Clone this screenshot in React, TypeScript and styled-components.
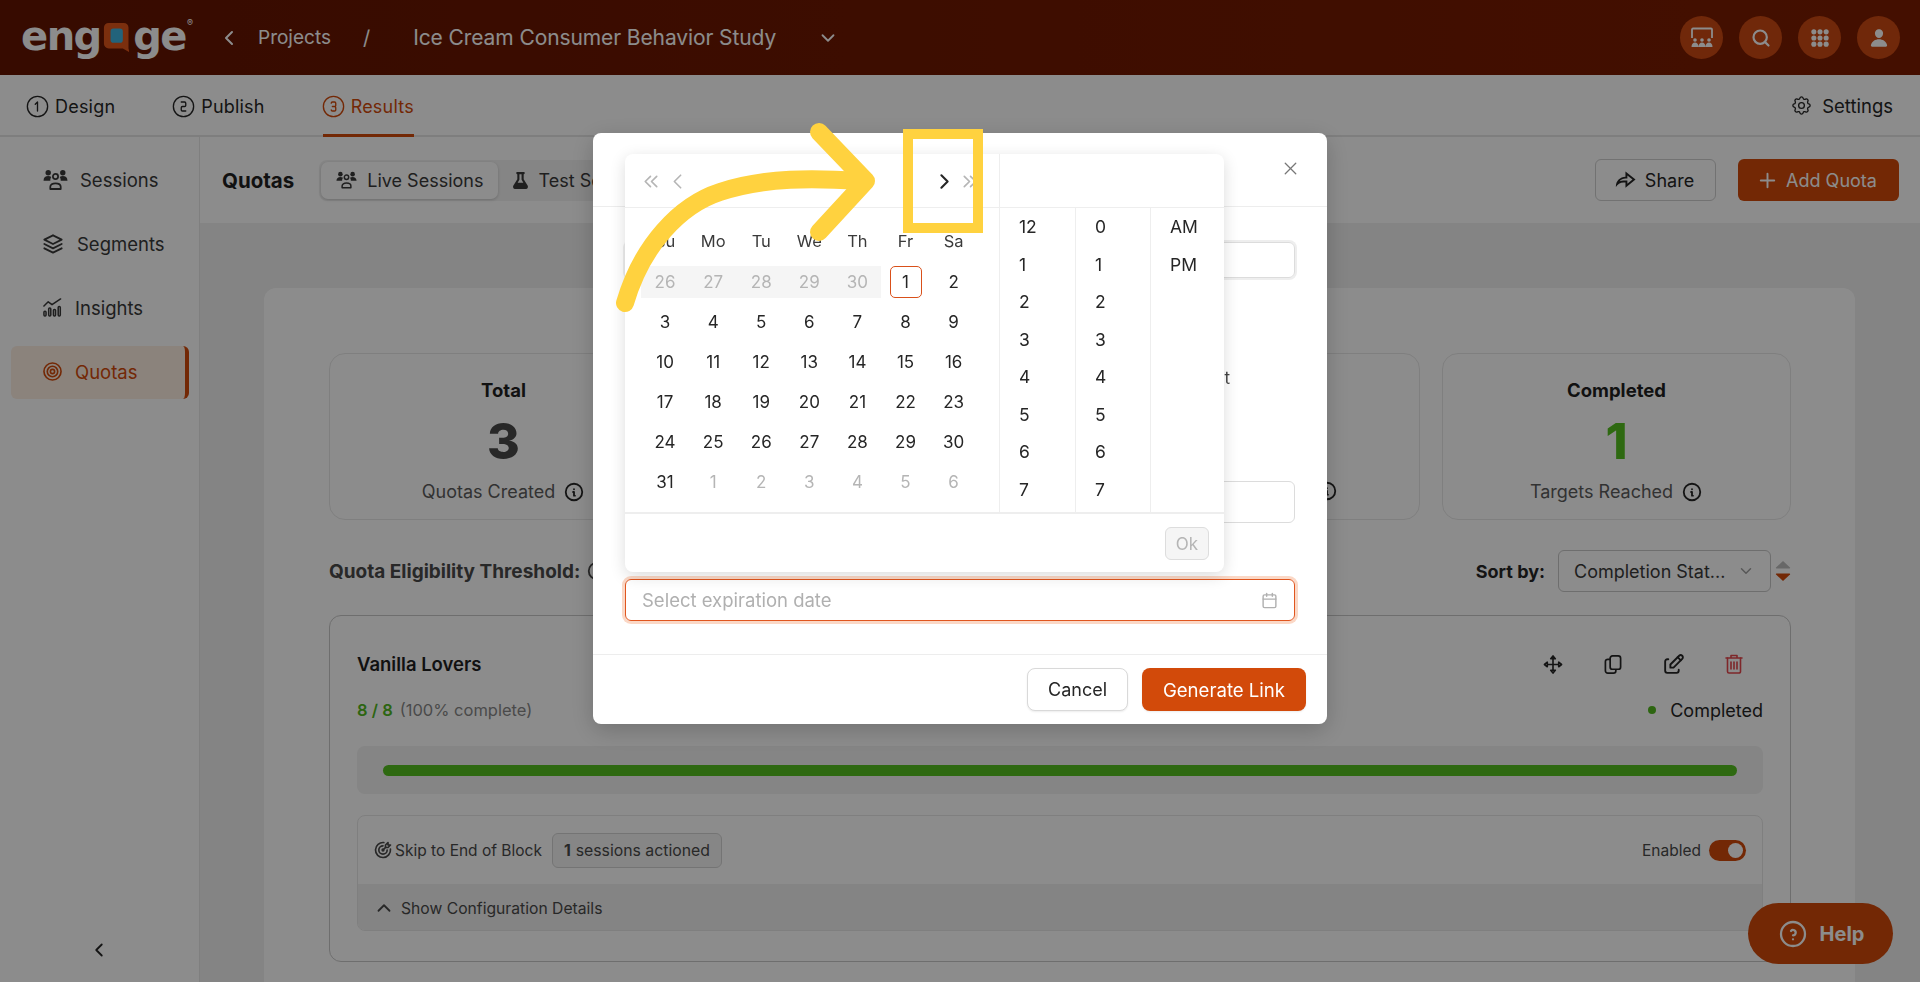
import styled, { createGlobalStyle } from "styled-components";
import { FiChevronDown, FiChevronLeft, FiChevronUp, FiPlus, FiSearch, FiX } from "react-icons/fi";
import { IoPerson } from "react-icons/io5";
import { LuCalendar } from "react-icons/lu";
import { RiShareForwardLine } from "react-icons/ri";
import { FaFlask } from "react-icons/fa";
import {
  TbChevronLeft,
  TbChevronRight,
  TbChevronsLeft,
  TbChevronsRight,
  TbCircleNumber1,
  TbCircleNumber2,
  TbCircleNumber3,
  TbEdit,
  TbHelpCircle,
  TbInfoCircle,
  TbSettings,
  TbStack2,
  TbTargetArrow,
} from "react-icons/tb";

const GlobalStyle = createGlobalStyle`
  html, body {
    margin: 0;
    height: 100%;
    overflow: hidden;
    background: #f0f0f0;
    font-family: Inter, "Noto Sans", sans-serif;
    color: #262626;
  }
  * { box-sizing: border-box; }
`;

const ORANGE = "#d24a0a";

function PeopleIcon({ size = 25 }: { size?: number }) {
  return (
    <svg width={size} height={size * 0.85} viewBox="0 0 24 20" fill="currentColor">
      <circle cx="5" cy="3.4" r="2.6" />
      <circle cx="19" cy="3.4" r="2.6" />
      <path d="M0.5 11c0-3 2-4.4 4.5-4.4 1.2 0 2.2.3 3 .9C7.2 8.500 7 9.700 7 11H.5zM23.500 11c0-3-2-4.400-4.500-4.400-1.200 0-2.200.3-3 .9.8 1 1 2.200 1 3.500h6.500z" />
      <circle cx="12" cy="7" r="2.500" fill="none" stroke="currentColor" strokeWidth="1.700" />
      <path d="M7 19v-2.200c0-2 2-3.300 5-3.300s5 1.300 5 3.300V19H7z" fill="none" stroke="currentColor" strokeWidth="1.700" strokeLinejoin="round" />
    </svg>
  );
}

function InsightsIcon() {
  return (
    <svg width="19" height="19" viewBox="0 0 20 20" fill="none" stroke="currentColor" strokeWidth="1.600" strokeLinecap="round" strokeLinejoin="round">
      <path d="M1 8.500l4.500-4.500 4 3L18.500 1" />
      <rect x="1" y="14" width="2.200" height="5" rx="1" />
      <rect x="6" y="10.500" width="2.200" height="8.500" rx="1" />
      <rect x="11" y="12" width="2.200" height="7" rx="1" />
      <rect x="16" y="9" width="2.200" height="10" rx="1" />
    </svg>
  );
}

function TargetIcon() {
  return (
    <svg width="19" height="19" viewBox="0 0 20 20" fill="none" stroke="currentColor" strokeWidth="1.700">
      <circle cx="10" cy="10" r="9" />
      <circle cx="10" cy="10" r="5.500" />
      <circle cx="10" cy="10" r="2.200" />
    </svg>
  );
}

function BoardIcon() {
  return (
    <svg width="24" height="22" viewBox="0 0 24 22" fill="currentColor">
      <path d="M2 11V2.500A1 1 0 0 1 3 1.500h18a1 1 0 0 1 1 1V11" fill="none" stroke="currentColor" strokeWidth="1.800" />
      <circle cx="5" cy="13" r="1.800" />
      <circle cx="12" cy="13" r="1.800" />
      <circle cx="19" cy="13" r="1.800" />
      <path d="M1.500 20c0-3 1.500-4.500 3.500-4.500S8.500 17 8.500 20zM8.500 20c0-3 1.500-4.500 3.500-4.500s3.500 1.500 3.500 4.500zM15.500 20c0-3 1.500-4.500 3.500-4.500s3.500 1.500 3.500 4.500z" />
    </svg>
  );
}

function DotsIcon() {
  const dots = [3, 9.500, 16];
  return (
    <svg width="18" height="20" viewBox="0 0 19 19" fill="currentColor">
      {dots.map((y) => dots.map((x) => <circle key={`${x}-${y}`} cx={x} cy={y} r="2.700" />))}
    </svg>
  );
}

function MoveIcon() {
  return (
    <svg width="20" height="19" viewBox="0 0 20 20" fill="none" stroke="currentColor" strokeWidth="1.700" strokeLinejoin="round">
      <path d="M10 1l2.400 3H7.600zM10 19l2.400-3H7.600zM1 10l3-2.400v4.800zM19 10l-3-2.400v4.800z" />
      <path d="M10 4v12M4 10h12" />
    </svg>
  );
}

function CopyIcon() {
  return (
    <svg width="18" height="19" viewBox="0 0 18 20" fill="none" stroke="currentColor" strokeWidth="1.800" strokeLinejoin="round">
      <rect x="6" y="1" width="11" height="14" rx="2.500" />
      <path d="M6 4.500H3.500A2.500 2.500 0 0 0 1 7v9.500A2.500 2.500 0 0 0 3.500 19h6a2.500 2.500 0 0 0 2.500-2.500V15" />
    </svg>
  );
}

function TrashIcon() {
  return (
    <svg width="18" height="20" viewBox="0 0 18 20" fill="none" stroke="currentColor" strokeWidth="1.600" strokeLinecap="round" strokeLinejoin="round">
      <path d="M1 4h16M6 4V1.500h6V4" />
      <path d="M2.500 4v13.500A1.500 1.500 0 0 0 4 19h10a1.500 1.500 0 0 0 1.500-1.500V4" />
      <path d="M6 8v7M9 8v7M12 8v7" />
    </svg>
  );
}

function BubbleIcon() {
  return (
    <svg width="28" height="34" viewBox="0 0 28 34">
      <path d="M6 1h16a5 5 0 0 1 5 5v22l1 4-7-4H6a5 5 0 0 1-5-5V6a5 5 0 0 1 5-5z" fill="#e0561a" />
      <rect x="8" y="7" width="13" height="15" rx="3" fill="#3fb4e0" />
    </svg>
  );
}

function SortArrows() {
  return (
    <svg width="16" height="22" viewBox="0 0 16 22">
      <path d="M8 1l7 6.500a.6.6 0 0 1-.4 1H1.400a.6.6 0 0 1-.4-1z" fill="#bdbdbd" />
      <path d="M8 21L1 14.500a.6.6 0 0 1 .4-1h13.200a.6.6 0 0 1 .4 1z" fill={ORANGE} />
    </svg>
  );
}

const Page = styled.div`
  height: 982px;
  display: flex;
  flex-direction: column;
  overflow: hidden;
`;

const Header = styled.header`
  height: 75px;
  flex: none;
  display: flex;
  align-items: center;
  padding: 0 21px;
  background: linear-gradient(90deg, #641400, #7d1d00);
  color: #fff;
`;

const Logo = styled.div`
  display: flex;
  align-items: center;
  width: 172px;
  color: #fff;
  font-family: "DejaVu Sans", sans-serif;
  font-size: 40px;
  font-weight: 700;
  line-height: 1;
  letter-spacing: -1.500px;
  padding-bottom: 4px;

  svg {
    margin: 4px 4px 0 2px;
  }
  sup {
    font-family: Inter, sans-serif;
    font-size: 9px;
    font-weight: 400;
    letter-spacing: 0;
    align-self: flex-start;
    margin: 2px 0 0 1px;
  }
`;

const Crumbs = styled.div`
  display: flex;
  align-items: center;
  font-size: 19px;
  margin-left: 24px;
  color: #fff;

  .back {
    font-size: 24px;
    margin-right: 17px;
  }
  .sep {
    font-size: 20px;
    margin: 0 43px 0 32px;
  }
  .title {
    font-size: 21px;
    letter-spacing: -0.100px;
  }
  .open {
    font-size: 22px;
    margin-left: 41px;
  }
`;

const HeaderIcons = styled.div`
  margin-left: auto;
  margin-right: -1px;
  display: flex;
  gap: 16px;
`;

const RoundButton = styled.div`
  width: 43px;
  height: 43px;
  border-radius: 50%;
  background: #cc4a13;
  color: #fff;
  display: flex;
  align-items: center;
  justify-content: center;
  font-size: 20px;
`;

const SearchIcon = styled(FiSearch)`
  stroke-width: 2.600;
`;

const Nav = styled.nav`
  height: 62px;
  flex: none;
  background: #fff;
  border-bottom: 2px solid #e6e6e6;
  display: flex;
  align-items: stretch;
  padding: 0 27px;
  gap: 58px;
`;

const Step = styled.div<{ $active?: boolean }>`
  display: flex;
  align-items: center;
  gap: 6px;
  font-size: 18px;
  letter-spacing: 0.200px;
  height: 62px;
  padding-top: 4px;
  color: ${(p) => (p.$active ? ORANGE : "#262626")};
  border-bottom: 3px solid ${(p) => (p.$active ? ORANGE : "transparent")};

  svg {
    font-size: 27px;
    stroke-width: 1.200;
    margin: 0 -2px 0 -3px;
  }
`;

const SettingsLink = styled.div`
  margin-left: auto;
  display: flex;
  align-items: center;
  gap: 9px;
  font-size: 18.500px;
  padding-top: 1px;

  svg {
    font-size: 23px;
    stroke-width: 1.400;
  }
`;

const Body = styled.div`
  flex: 1;
  display: flex;
  min-height: 0;
`;

const Sidebar = styled.aside`
  width: 200px;
  flex: none;
  background: #fff;
  border-right: 1px solid #e8e8e8;
  padding: 17px 10px 0 11px;
  display: flex;
  flex-direction: column;
`;

const SideItem = styled.div<{ $active?: boolean; $gap: number }>`
  height: 53px;
  margin-bottom: 11px;
  padding: 0 0 2px 32px;
  display: flex;
  align-items: center;
  gap: ${(p) => p.$gap}px;
  font-size: 18.500px;
  border-radius: 6px;
  color: ${(p) => (p.$active ? ORANGE : "#3a3a3a")};
  background: ${(p) => (p.$active ? "#fdeee2" : "transparent")};
  border-right: 4px solid ${(p) => (p.$active ? ORANGE : "transparent")};
`;

const StackIcon = styled(TbStack2)`
  margin-left: -3px;
  font-size: 26px;
  stroke-width: 1.700;
`;

const Collapse = styled.div`
  margin-top: auto;
  height: 43px;
  display: flex;
  justify-content: center;
  font-size: 22px;
  padding-right: 2px;
`;

const Main = styled.main`
  flex: 1;
  min-width: 0;
  display: flex;
  flex-direction: column;
`;

const Toolbar = styled.div`
  height: 86px;
  flex: none;
  background: #fff;
  display: flex;
  align-items: center;
  padding: 0 21px 0 22px;
`;

const PageTitle = styled.h1`
  margin: 0 25px 0 0;
  font-size: 20.500px;
  font-weight: 700;
  color: #1f1f1f;
`;

const Segmented = styled.div`
  display: flex;
  background: #f2f2f2;
  border-radius: 8px;
  padding: 2px;
`;

const SegmentTab = styled.div<{ $active?: boolean }>`
  height: 37px;
  display: flex;
  align-items: center;
  gap: 10px;
  padding: 0 15px;
  font-size: 18px;
  border-radius: 7px;
  color: #3a3a3a;
  background: ${(p) => (p.$active ? "#fff" : "transparent")};
  box-shadow: ${(p) => (p.$active ? "0 1px 3px rgba(0,0,0,.18)" : "none")};
`;

const FlaskIcon = styled(FaFlask)`
  margin: 0 -1px;
`;

const ToolbarButton = styled.div<{ $primary?: boolean }>`
  height: 42px;
  flex: none;
  width: ${(p) => (p.$primary ? "161px" : "121px")};
  padding-right: 4px;
  display: flex;
  align-items: center;
  justify-content: center;
  gap: ${(p) => (p.$primary ? "7px" : "9px")};
  font-size: 18px;
  border-radius: 6px;
  color: ${(p) => (p.$primary ? "#fff" : "#262626")};
  background: ${(p) => (p.$primary ? ORANGE : "#fff")};
  border: ${(p) => (p.$primary ? "none" : "1.500px solid #cfcfcf")};
  margin-left: ${(p) => (p.$primary ? "22px" : "auto")};

  svg {
    font-size: 23px;
  }
`;

const Canvas = styled.div`
  flex: 1;
  min-height: 0;
  padding: 65px 65px 0 64px;
`;

const Card = styled.section`
  background: #fff;
  border-radius: 12px 12px 0 0;
  padding: 65px 64px 0 65px;
  height: 800px;
`;

const Stats = styled.div`
  display: grid;
  grid-template-columns: repeat(4, 1fr);
  gap: 22px;
`;

const Stat = styled.div`
  height: 167px;
  border: 1px solid #e8e8e8;
  border-radius: 16px;
  display: flex;
  flex-direction: column;
  align-items: center;
  padding-top: 24px;
`;

const StatTitle = styled.div`
  font-size: 18.500px;
  font-weight: 700;
  color: #1f1f1f;
  line-height: 24px;
  min-height: 24px;
`;

const StatValue = styled.div<{ $color?: string }>`
  font-size: 50px;
  font-weight: 800;
  line-height: 60px;
  min-height: 60px;
  margin-top: 9px;
  color: ${(p) => p.$color || "#4a4a4a"};
`;

const StatLabel = styled.div<{ $shift?: number }>`
  display: flex;
  align-items: center;
  gap: 8px;
  margin-top: 9px;
  margin-left: ${(p) => p.$shift || 0}px;
  font-size: 18px;
  line-height: 24px;
  color: #5c5c5c;

  svg {
    color: #262626;
    font-size: 22px;
  }
`;

const FilterRow = styled.div`
  height: 42px;
  margin-top: 30px;
  display: flex;
  align-items: center;
`;

const Threshold = styled.div`
  display: flex;
  align-items: center;
  gap: 6px;
  font-size: 19px;
  font-weight: 700;
  color: #4a4a4a;
  white-space: nowrap;

  svg {
    font-size: 22px;
  }
`;

const SortLabel = styled.div`
  margin-left: auto;
  font-size: 18px;
  font-weight: 700;
  color: #262626;
`;

const SortSelect = styled.div`
  width: 213px;
  height: 42px;
  margin: 0 4px 0 13px;
  padding: 0 15px;
  border: 1.500px solid #c8c8c8;
  border-radius: 6px;
  display: flex;
  align-items: center;
  justify-content: space-between;
  font-size: 18px;
  color: #3a3a3a;
  white-space: nowrap;

  svg {
    color: #a0a0a0;
    font-size: 18px;
  }
`;

const QuotaCard = styled.div`
  margin-top: 23px;
  height: 347px;
  border: 1.500px solid #c9c9c9;
  border-radius: 12px;
  padding: 26px 27px 0;
`;

const QuotaTop = styled.div`
  display: flex;
  align-items: center;
  justify-content: space-between;
  height: 44px;
`;

const QuotaName = styled.div`
  font-size: 18.500px;
  font-weight: 600;
  color: #1f1f1f;
`;

const QuotaActions = styled.div`
  display: flex;
  align-items: center;
  gap: 36.500px;
  margin-right: 17px;
`;

const ActionSlot = styled.span<{ $danger?: boolean }>`
  width: 24px;
  display: flex;
  justify-content: center;
  color: ${(p) => (p.$danger ? "#e5484d" : "#262626")};
`;

const EditIcon = styled(TbEdit)`
  font-size: 25px;
  stroke-width: 1.800;
  flex: none;
`;

const QuotaMeta = styled.div`
  display: flex;
  align-items: center;
  justify-content: space-between;
  height: 30px;
  margin-top: 9px;
`;

const QuotaCount = styled.div`
  font-size: 16.500px;
  color: #888;

  b {
    font-weight: 600;
    color: #52b91f;
    margin-right: 7px;
  }
`;

const QuotaStatus = styled.div`
  display: flex;
  align-items: center;
  gap: 14px;
  font-size: 18px;
  color: #262626;

  i {
    width: 8px;
    height: 8px;
    border-radius: 50%;
    background: #52b91f;
  }
`;

const ProgressTrack = styled.div`
  height: 48px;
  margin-top: 21px;
  background: #f2f2f2;
  border-radius: 8px;
  display: flex;
  align-items: center;
  padding: 0 26px;
`;

const ProgressBar = styled.div`
  height: 11px;
  flex: 1;
  border-radius: 6px;
  background: #55c020;
`;

const ActionBox = styled.div`
  margin-top: 21px;
  height: 116px;
  border: 1px solid #e8e8e8;
  border-radius: 8px;
  overflow: hidden;
`;

const ActionTop = styled.div`
  height: 68px;
  display: flex;
  align-items: center;
  padding: 0 16px;
  font-size: 15.500px;
  color: #4a4a4a;

  .skip {
    font-size: 20px;
    margin: 0 2px 0 -1px;
  }
`;

const ActionBadge = styled.div`
  height: 35px;
  margin-left: 10px;
  padding: 0 11px;
  display: flex;
  align-items: center;
  gap: 5px;
  border: 1.500px solid #d4d4d4;
  border-radius: 6px;
  background: #f5f5f5;
  font-size: 15.800px;

  b {
    font-weight: 700;
  }
`;

const Enabled = styled.div`
  margin-left: auto;
  display: flex;
  align-items: center;
  gap: 8px;
`;

const Toggle = styled.div`
  width: 37px;
  height: 21px;
  border-radius: 11px;
  background: ${ORANGE};
  display: flex;
  justify-content: flex-end;
  padding: 3px;

  i {
    width: 15px;
    height: 15px;
    border-radius: 50%;
    background: #fff;
  }
`;

const ActionBottom = styled.div`
  height: 48px;
  background: #f0f0f0;
  display: flex;
  align-items: center;
  gap: 6px;
  padding: 0 15px;
  font-size: 15.700px;
  color: #4a4a4a;

  svg {
    font-size: 22px;
  }
`;

const HelpButton = styled.div`
  position: absolute;
  left: 1748px;
  top: 903px;
  width: 145px;
  height: 61px;
  border-radius: 31px;
  background: ${ORANGE};
  color: #fff;
  font-size: 20px;
  font-weight: 700;
  display: flex;
  align-items: center;
  justify-content: center;
  gap: 11px;

  svg {
    font-size: 32px;
    stroke-width: 1.700;
  }
`;

const Overlay = styled.div`
  position: fixed;
  inset: 0;
  background: rgba(0, 0, 0, 0.45);
  display: flex;
  justify-content: center;
  padding-top: 133px;
`;

const Modal = styled.div`
  position: relative;
  width: 734px;
  height: 591px;
  background: #fff;
  border-radius: 8px;
  box-shadow: 0 6px 24px rgba(0, 0, 0, 0.2);
  display: flex;
  flex-direction: column;
`;

const ModalHead = styled.div`
  height: 74px;
  flex: none;
  display: flex;
  align-items: center;
  justify-content: flex-end;
  padding: 0 26px 2px 0;
  border-bottom: 1px solid #ededed;

  svg {
    color: #777;
    font-size: 21px;
    stroke-width: 1.500;
  }
`;

const ModalBody = styled.div`
  flex: 1;
  padding: 35px 32px 0;
  display: flex;
  flex-direction: column;
`;

const FieldInput = styled.div<{ $ring?: boolean; $height: number; $top?: number }>`
  height: ${(p) => p.$height}px;
  margin-top: ${(p) => p.$top || 0}px;
  border: 1px solid #dcdcdc;
  border-radius: 6px;
  box-shadow: ${(p) => (p.$ring ? "0 0 0 2px #eee" : "none")};
`;

const OptionText = styled.div`
  margin: 88px 65px 0 0;
  height: 24px;
  line-height: 24px;
  text-align: right;
  font-size: 17px;
  color: #444;
`;

const DateField = styled.div`
  height: 42px;
  margin-top: 56px;
  padding: 0 16px;
  border: 1px solid #e0561f;
  border-radius: 6px;
  box-shadow: 0 0 0 3px #fbd8c6;
  display: flex;
  align-items: center;
  justify-content: space-between;
  font-size: 18.500px;
  color: #b0b0b0;

  svg {
    font-size: 17px;
  }
`;

const ModalFoot = styled.div`
  height: 70px;
  flex: none;
  border-top: 1px solid #ededed;
  display: flex;
  justify-content: flex-end;
  align-items: flex-start;
  padding: 13px 21px 0 0;
  gap: 14px;
`;

const FootButton = styled.div<{ $primary?: boolean }>`
  height: 43px;
  display: flex;
  align-items: center;
  justify-content: center;
  border-radius: 8px;
  font-size: ${(p) => (p.$primary ? "18.600px" : "18px")};
  width: ${(p) => (p.$primary ? "164px" : "101px")};
  color: ${(p) => (p.$primary ? "#fff" : "#262626")};
  background: ${(p) => (p.$primary ? ORANGE : "#fff")};
  border: ${(p) => (p.$primary ? "none" : "1px solid #d9d9d9")};
  box-shadow: 0 1px 2px rgba(0, 0, 0, 0.08);
`;

const Picker = styled.div`
  position: absolute;
  left: 32px;
  top: 21px;
  width: 599px;
  height: 418px;
  background: #fff;
  border-radius: 8px;
  box-shadow: 0 4px 16px rgba(0, 0, 0, 0.14);
  display: flex;
  flex-direction: column;
`;

const PickerMain = styled.div`
  flex: 1;
  display: flex;
  min-height: 0;
  border-bottom: 2px solid #eeeeee;
`;

const CalendarPane = styled.div`
  width: 375px;
  flex: none;
  border-right: 1px solid #eeeeee;
`;

const PickerHead = styled.div`
  height: 54px;
  border-bottom: 1px solid #eeeeee;
  display: flex;
  align-items: center;
  padding: 2px 17px 0 14px;
  font-size: 25px;
  color: #b5b5b5;

  svg {
    stroke-width: 1.600;
  }
  span {
    flex: 1;
    text-align: center;
    font-size: 16px;
    font-weight: 600;
    color: #262626;
  }
  .prev {
    margin-left: 1px;
  }
  .next {
    color: #262626;
    stroke-width: 2;
  }
`;

const DayGrid = styled.div`
  display: grid;
  grid-template-columns: repeat(7, 48.100px);
  grid-template-rows: 41px;
  grid-auto-rows: 40px;
  padding: 13px 0 0 16px;
  font-size: 17px;
`;

const Weekday = styled.div`
  display: flex;
  align-items: center;
  justify-content: center;
  color: #3a3a3a;
  font-size: 16.500px;
  padding-bottom: 1px;
`;

const Day = styled.div<{ $muted?: boolean; $range?: boolean }>`
  display: flex;
  align-items: center;
  justify-content: center;
  color: ${(p) => (p.$muted ? "#b5b5b5" : "#262626")};

  span {
    height: 32px;
    width: ${(p) => (p.$range ? "100%" : "32px")};
    display: flex;
    align-items: center;
    justify-content: center;
    background: ${(p) => (p.$range ? "#f5f5f5" : "transparent")};
  }
`;

const Today = styled.span`
  border: 1.500px solid #d9501a;
  border-radius: 5px;
`;

const TimePane = styled.div`
  flex: 1;
  display: flex;
  padding-top: 54px;
  position: relative;

  &::before {
    content: "";
    position: absolute;
    left: 0;
    right: 0;
    top: 53px;
    height: 1px;
    background: #eeeeee;
  }
`;

const TimeColumn = styled.div<{ $width: number; $border?: boolean }>`
  width: ${(p) => p.$width}px;
  padding: 0 0 0 19px;
  border-right: ${(p) => (p.$border ? "1px solid #eeeeee" : "none")};
  font-size: 17.500px;
  overflow: hidden;

  div {
    height: 37.500px;
    display: flex;
    align-items: center;
  }
`;

const PickerFoot = styled.div`
  height: 58px;
  flex: none;
  display: flex;
  justify-content: flex-end;
  align-items: flex-start;
  padding: 13px 15px 0 0;
`;

const OkButton = styled.div`
  width: 44px;
  height: 33px;
  border: 1px solid #dddddd;
  border-radius: 6px;
  background: #f5f5f5;
  color: #b5b5b5;
  font-size: 17px;
  display: flex;
  align-items: center;
  justify-content: center;
`;

const Annotation = styled.svg`
  position: fixed;
  left: 0;
  top: 0;
  pointer-events: none;
`;

const weekdays = ["Su", "Mo", "Tu", "We", "Th", "Fr", "Sa"];
const hours = [12, 1, 2, 3, 4, 5, 6, 7];
const minutes = [0, 1, 2, 3, 4, 5, 6, 7];

export default function App() {
  const thisMonth = Array.from({ length: 30 }, (_, i) => i + 2);
  return (
    <Page>
      <GlobalStyle />
      <Header>
        <Logo>
          eng
          <BubbleIcon />
          ge<sup>®</sup>
        </Logo>
        <Crumbs>
          <FiChevronLeft className="back" />
          Projects
          <span className="sep">/</span>
          <span className="title">Ice Cream Consumer Behavior Study</span>
          <FiChevronDown className="open" />
        </Crumbs>
        <HeaderIcons>
          <RoundButton>
            <BoardIcon />
          </RoundButton>
          <RoundButton>
            <SearchIcon />
          </RoundButton>
          <RoundButton>
            <DotsIcon />
          </RoundButton>
          <RoundButton>
            <IoPerson />
          </RoundButton>
        </HeaderIcons>
      </Header>
      <Nav>
        <Step>
          <TbCircleNumber1 />
          Design
        </Step>
        <Step>
          <TbCircleNumber2 />
          Publish
        </Step>
        <Step $active>
          <TbCircleNumber3 />
          Results
        </Step>
        <SettingsLink>
          <TbSettings />
          Settings
        </SettingsLink>
      </Nav>
      <Body>
        <Sidebar>
          <SideItem $gap={12}>
            <PeopleIcon />
            Sessions
          </SideItem>
          <SideItem $gap={11}>
            <StackIcon />
            Segments
          </SideItem>
          <SideItem $gap={13}>
            <InsightsIcon />
            Insights
          </SideItem>
          <SideItem $active $gap={13}>
            <TargetIcon />
            Quotas
          </SideItem>
          <Collapse>
            <FiChevronLeft />
          </Collapse>
        </Sidebar>
        <Main>
          <Toolbar>
            <PageTitle>Quotas</PageTitle>
            <Segmented>
              <SegmentTab $active>
                <PeopleIcon size={21} />
                Live Sessions
              </SegmentTab>
              <SegmentTab>
                <FlaskIcon size={17} />
                Test Sessions
              </SegmentTab>
            </Segmented>
            <ToolbarButton>
              <RiShareForwardLine />
              Share
            </ToolbarButton>
            <ToolbarButton $primary>
              <FiPlus />
              Add Quota
            </ToolbarButton>
          </Toolbar>
          <Canvas>
            <Card>
              <Stats>
                <Stat>
                  <StatTitle>Total</StatTitle>
                  <StatValue>3</StatValue>
                  <StatLabel>
                    Quotas Created
                    <TbInfoCircle />
                  </StatLabel>
                </Stat>
                <Stat />
                <Stat>
                  <StatTitle />
                  <StatValue />
                  <StatLabel $shift={163}>
                    <TbInfoCircle />
                  </StatLabel>
                </Stat>
                <Stat>
                  <StatTitle>Completed</StatTitle>
                  <StatValue $color="#55c020">1</StatValue>
                  <StatLabel>
                    Targets Reached
                    <TbInfoCircle />
                  </StatLabel>
                </Stat>
              </Stats>
              <FilterRow>
                <Threshold>
                  Quota Eligibility Threshold:
                  <TbInfoCircle />
                </Threshold>
                <SortLabel>Sort by:</SortLabel>
                <SortSelect>
                  Completion Stat...
                  <FiChevronDown />
                </SortSelect>
                <SortArrows />
              </FilterRow>
              <QuotaCard>
                <QuotaTop>
                  <QuotaName>Vanilla Lovers</QuotaName>
                  <QuotaActions>
                    <ActionSlot>
                      <MoveIcon />
                    </ActionSlot>
                    <ActionSlot>
                      <CopyIcon />
                    </ActionSlot>
                    <ActionSlot>
                      <EditIcon />
                    </ActionSlot>
                    <ActionSlot $danger>
                      <TrashIcon />
                    </ActionSlot>
                  </QuotaActions>
                </QuotaTop>
                <QuotaMeta>
                  <QuotaCount>
                    <b>8 / 8</b>(100% complete)
                  </QuotaCount>
                  <QuotaStatus>
                    <i />
                    Completed
                  </QuotaStatus>
                </QuotaMeta>
                <ProgressTrack>
                  <ProgressBar />
                </ProgressTrack>
                <ActionBox>
                  <ActionTop>
                    <TbTargetArrow className="skip" />
                    Skip to End of Block
                    <ActionBadge>
                      <b>1</b> sessions actioned
                    </ActionBadge>
                    <Enabled>
                      Enabled
                      <Toggle>
                        <i />
                      </Toggle>
                    </Enabled>
                  </ActionTop>
                  <ActionBottom>
                    <FiChevronUp />
                    Show Configuration Details
                  </ActionBottom>
                </ActionBox>
              </QuotaCard>
            </Card>
          </Canvas>
        </Main>
      </Body>
      <HelpButton>
        <TbHelpCircle />
        Help
      </HelpButton>
      <Overlay>
        <Modal>
          <ModalHead>
            <FiX />
          </ModalHead>
          <ModalBody>
            <FieldInput $ring $height={36} />
            <OptionText>Limit</OptionText>
            <FieldInput $height={42} $top={91} />
            <DateField>
              Select expiration date
              <LuCalendar />
            </DateField>
          </ModalBody>
          <ModalFoot>
            <FootButton>Cancel</FootButton>
            <FootButton $primary>Generate Link</FootButton>
          </ModalFoot>
          <Picker>
            <PickerMain>
              <CalendarPane>
                <PickerHead>
                  <TbChevronsLeft />
                  <TbChevronLeft className="prev" />
                  <span>Dec 2023</span>
                  <TbChevronRight className="next" />
                  <TbChevronsRight />
                </PickerHead>
                <DayGrid>
                  {weekdays.map((w) => (
                    <Weekday key={w}>{w}</Weekday>
                  ))}
                  {[26, 27, 28, 29, 30].map((d) => (
                    <Day key={`p${d}`} $muted $range>
                      <span>{d}</span>
                    </Day>
                  ))}
                  <Day>
                    <Today>1</Today>
                  </Day>
                  {thisMonth.map((d) => (
                    <Day key={d}>
                      <span>{d}</span>
                    </Day>
                  ))}
                  {[1, 2, 3, 4, 5, 6].map((d) => (
                    <Day key={`n${d}`} $muted>
                      <span>{d}</span>
                    </Day>
                  ))}
                </DayGrid>
              </CalendarPane>
              <TimePane>
                <TimeColumn $width={76} $border>
                  {hours.map((h) => (
                    <div key={h}>{h}</div>
                  ))}
                </TimeColumn>
                <TimeColumn $width={75} $border>
                  {minutes.map((m) => (
                    <div key={m}>{m}</div>
                  ))}
                </TimeColumn>
                <TimeColumn $width={73}>
                  <div>AM</div>
                  <div>PM</div>
                </TimeColumn>
              </TimePane>
            </PickerMain>
            <PickerFoot>
              <OkButton>Ok</OkButton>
            </PickerFoot>
          </Picker>
        </Modal>
      </Overlay>
      <Annotation width="1920" height="982" viewBox="0 0 1920 982" fill="none" stroke="#ffd23f">
        <path d="M625 303C642 245 680 205 720 192C765 177 815 178 860 181" strokeWidth="18" strokeLinecap="round" />
        <path d="M819 132L866 181L819 232" strokeWidth="18" strokeLinecap="round" strokeLinejoin="round" />
        <rect x="908" y="134" width="70" height="94" strokeWidth="10" />
      </Annotation>
    </Page>
  );
}
